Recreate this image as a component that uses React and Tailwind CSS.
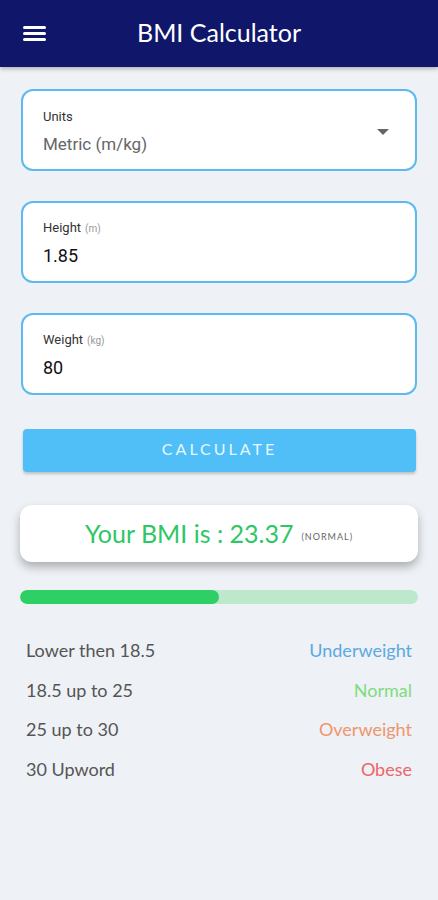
function Field({ label, unit, value, select }) {
    return (
        <div className="h-[82px] rounded-xl border-2 border-[#5cbaf0] bg-white px-5 flex items-center">
            <div className="flex-1 pt-[2px]">
                <div className="text-[13px] text-[#333] leading-none font-['Roboto',sans-serif]">
                    {label}
                    {unit && <span className="text-[10px] text-[#999] ml-1">{unit}</span>}
                </div>
                <div className={"mt-[13px] leading-none font-['Roboto',sans-serif] " + (select ? "text-[17px] text-[#666]" : "text-[18px] text-[#111]")}>
                    {value}
                </div>
            </div>
            {select && (
                <div className="w-0 h-0 border-l-[6px] border-r-[6px] border-t-[6px] border-l-transparent border-r-transparent border-t-[#666] mr-[6px] mt-[4px]" />
            )}
        </div>
    );
}

const ranges = [
    ["Lower then 18.5", "Underweight", "text-[#5aa9e2]"],
    ["18.5 up to 25", "Normal", "text-[#7fdc7f]"],
    ["25 up to 30", "Overweight", "text-[#f0956c]"],
    ["30 Upword", "Obese", "text-[#ef6466]"],
];

export default function App() {
    return (
        <div className="min-h-[900px] bg-[#eef1f5] font-['Lato',sans-serif]">
            <div className="h-[67px] bg-[#10166a] flex items-center shadow-[0_2px_4px_rgba(0,0,0,0.25)] relative">
                <div className="pl-[23px] w-[60px] flex flex-col gap-[3px]">
                    <div className="w-[23px] h-[3px] bg-white rounded-full" />
                    <div className="w-[23px] h-[3px] bg-white rounded-full" />
                    <div className="w-[23px] h-[3px] bg-white rounded-full" />
                </div>
                <div className="flex-1 text-center text-white text-[25px] pr-[60px] -mt-[1px]">BMI Calculator</div>
            </div>

            <div className="px-[21px] pt-[22px] flex flex-col gap-[30px]">
                <Field label="Units" value="Metric (m/kg)" select />
                <Field label="Height" unit="(m)" value="1.85" />
                <Field label="Weight" unit="(kg)" value="80" />
            </div>

            <div className="px-[23px] mt-[34px] mr-[-1px]">
                <div className="h-[43px] rounded bg-[#50bff8] shadow-[0_2px_3px_rgba(0,0,0,0.2)] flex items-center justify-center text-[#e8f7ff] text-[16px] tracking-[3px] pb-[3px]">
                    CALCULATE
                </div>
            </div>

            <div className="px-[20px] mt-[33px]">
                <div className="h-[57px] rounded-xl bg-white shadow-[0_5px_10px_rgba(0,0,0,0.28)] flex items-center justify-center">
                    <span className="text-[25px] text-[#2ec766]">Your BMI is : 23.37</span>
                    <span className="text-[9px] text-[#666] ml-[8px] mt-[6px] tracking-[1px]">(NORMAL)</span>
                </div>
            </div>

            <div className="px-[20px] mt-[28px]">
                <div className="h-[14px] rounded-full bg-[#bde8cc] flex overflow-hidden">
                    <div className="w-1/2 bg-[#2ecf64] rounded-full" />
                </div>
            </div>

            <div className="pl-[26px] pr-[26px] mt-[27px] flex flex-col">
                {ranges.map(([left, right, color]) => (
                    <div key={left} className="h-[39.5px] flex items-center justify-between text-[18px]">
                        <span className="text-[#555]">{left}</span>
                        <span className={color}>{right}</span>
                    </div>
                ))}
            </div>
        </div>
    );
}
